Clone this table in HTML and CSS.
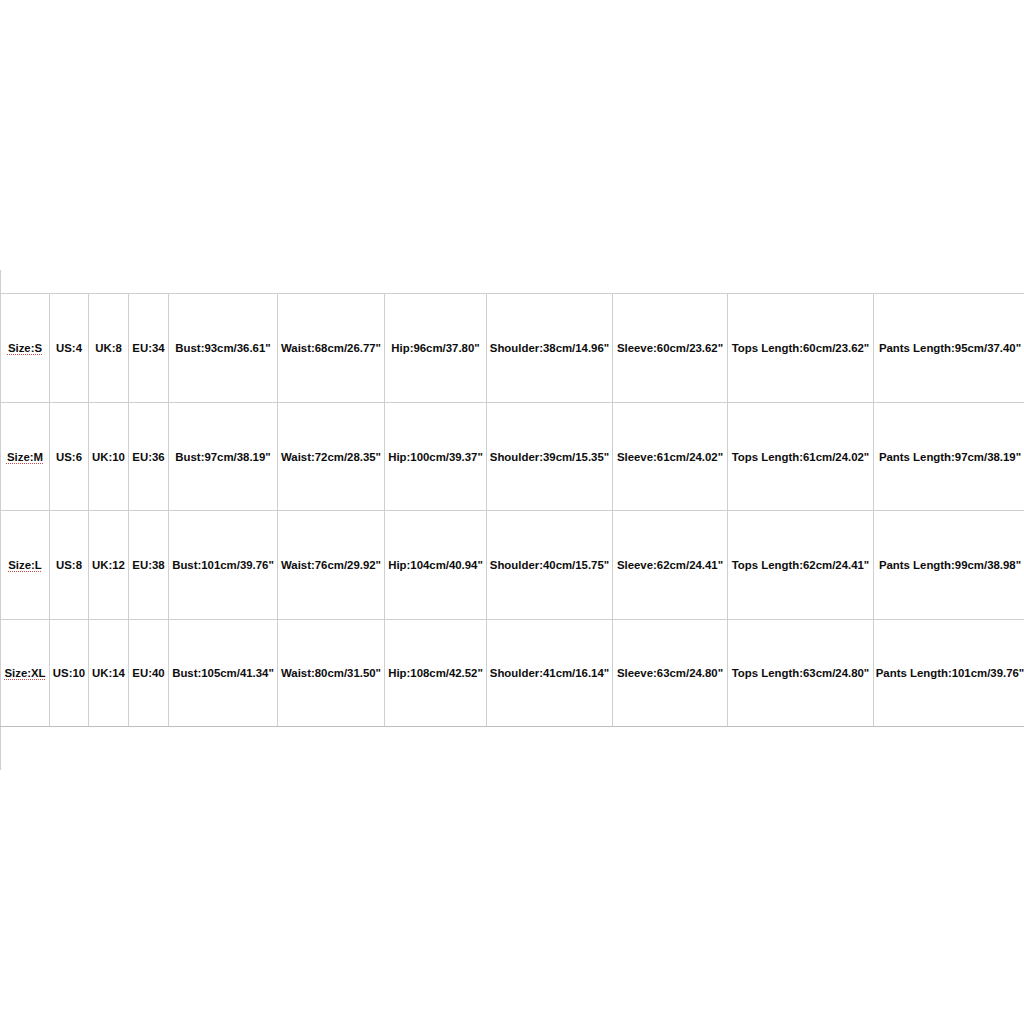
FILE: index.html
```html
<!DOCTYPE html>
<html lang="en">

<head>
  <meta charset="UTF-8" />
  <meta name="viewport" content="width=device-width, initial-scale=1.0" />
  <title>Size Chart</title>
  <link rel="stylesheet" href="styles.css">
</head>

<body>
  <div class="sheet">
    <table class="size-table">
      <colgroup>
        <col class="c-size">
        <col class="c-us">
        <col class="c-uk">
        <col class="c-eu">
        <col class="c-bust">
        <col class="c-waist">
        <col class="c-hip">
        <col class="c-shoulder">
        <col class="c-sleeve">
        <col class="c-tops">
        <col class="c-pants">
      </colgroup>
      <tbody>
        <tr class="r1">
          <td><span class="spell">Size:S</span></td>
          <td>US:4</td>
          <td>UK:8</td>
          <td>EU:34</td>
          <td>Bust:93cm/36.61"</td>
          <td>Waist:68cm/26.77"</td>
          <td>Hip:96cm/37.80"</td>
          <td>Shoulder:38cm/14.96"</td>
          <td>Sleeve:60cm/23.62"</td>
          <td>Tops Length:60cm/23.62"</td>
          <td>Pants Length:95cm/37.40"</td>
        </tr>
        <tr class="r2">
          <td><span class="spell">Size:M</span></td>
          <td>US:6</td>
          <td>UK:10</td>
          <td>EU:36</td>
          <td>Bust:97cm/38.19"</td>
          <td>Waist:72cm/28.35"</td>
          <td>Hip:100cm/39.37"</td>
          <td>Shoulder:39cm/15.35"</td>
          <td>Sleeve:61cm/24.02"</td>
          <td>Tops Length:61cm/24.02"</td>
          <td>Pants Length:97cm/38.19"</td>
        </tr>
        <tr class="r3">
          <td><span class="spell">Size:L</span></td>
          <td>US:8</td>
          <td>UK:12</td>
          <td>EU:38</td>
          <td>Bust:101cm/39.76"</td>
          <td>Waist:76cm/29.92"</td>
          <td>Hip:104cm/40.94"</td>
          <td>Shoulder:40cm/15.75"</td>
          <td>Sleeve:62cm/24.41"</td>
          <td>Tops Length:62cm/24.41"</td>
          <td>Pants Length:99cm/38.98"</td>
        </tr>
        <tr class="r4">
          <td><span class="spell">Size:XL</span></td>
          <td>US:10</td>
          <td>UK:14</td>
          <td>EU:40</td>
          <td>Bust:105cm/41.34"</td>
          <td>Waist:80cm/31.50"</td>
          <td>Hip:108cm/42.52"</td>
          <td>Shoulder:41cm/16.14"</td>
          <td>Sleeve:63cm/24.80"</td>
          <td>Tops Length:63cm/24.80"</td>
          <td>Pants Length:101cm/39.76"</td>
        </tr>
      </tbody>
    </table>
  </div>
</body>

</html>
```

FILE: styles.css
```css
:root {
  --grid-line: #cfcfcf;
  --text-main: #0d0d0d;
}

* {
  box-sizing: border-box;
}

html,
body {
  margin: 0;
  width: 1024px;
  height: 1024px;
  overflow: hidden;
  background: #fff;
}

body {
  font-family: "Liberation Sans", Arial, sans-serif;
  color: var(--text-main);
}

.sheet {
  margin-top: 270px;
  width: 1026px;
  height: 500px;
  padding-top: 23px;
  border-left: 1px solid var(--grid-line);
}

.size-table {
  margin-left: -1px;
  width: 1026px;
  table-layout: fixed;
  border-collapse: collapse;
}

.size-table td {
  border: 1px solid var(--grid-line);
  padding: 0;
  text-align: center;
  vertical-align: middle;
  white-space: nowrap;
  overflow: hidden;
  font-size: 11.4px;
  font-weight: 700;
}

.size-table tr.r1 td { height: 109px; }
.size-table tr.r2 td { height: 108px; }
.size-table tr.r3 td { height: 109px; }
.size-table tr.r4 td { height: 107px; }

.size-table tr.r4 td {
  border-bottom-color: #bdbdbd;
}

.c-size { width: 49px; }
.c-us { width: 39px; }
.c-uk { width: 40px; }
.c-eu { width: 40px; }
.c-bust { width: 109px; }
.c-waist { width: 107px; }
.c-hip { width: 102px; }
.c-shoulder { width: 126px; }
.c-sleeve { width: 115px; }
.c-tops { width: 146px; }
.c-pants { width: 153px; }

/* the red dotted line the spreadsheet draws under "Size" */
.spell {
  text-decoration: underline dotted #c84a4a;
  text-decoration-thickness: 1px;
  text-underline-offset: 2px;
}
```
